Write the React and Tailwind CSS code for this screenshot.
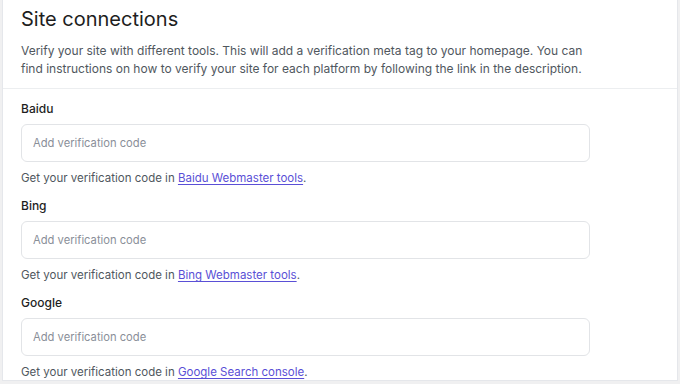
import React from 'react';

const platforms = [
  { name: 'Baidu', link: 'Baidu Webmaster tools' },
  { name: 'Bing', link: 'Bing Webmaster tools' },
  { name: 'Google', link: 'Google Search console' },
];

function Field({ name, link }) {
  return (
    <div className="flex flex-col">
      <label className="text-[12px] font-medium text-[#1e1e1e] leading-[18px]">{name}</label>
      <input
        type="text"
        placeholder="Add verification code"
        className="mt-[6px] h-[38px] w-[569px] rounded-md border border-[#e2e4e7] bg-white px-[11px] text-[11.2px] text-gray-800 placeholder:text-[#8a8f99] outline-none"
      />
      <p className="mt-[7px] text-[11.5px] leading-[18px] text-[#50575e]">
        Get your verification code in{' '}
        <a href="#" className="text-[#5a4fd6] underline underline-offset-2">
          {link}
        </a>
        .
      </p>
    </div>
  );
}

export default function App() {
  return (
    <div className="h-[384px] w-[680px] bg-[#f0f0f1] pl-[2px] pr-[2px] pb-[3px] overflow-hidden" style={{ fontFamily: 'Inter, "Noto Sans", sans-serif' }}>
      <div className="h-full border border-t-0 border-[#e5e7eb] bg-white">
        <div className="border-b border-[#eceef0] px-[18px] pt-[5px] pb-[10px]">
          <h2 className="text-[20px] leading-7 text-[#1e1e1e]">Site connections</h2>
          <p className="mt-[9px] w-[580px] text-[12px] leading-[18px] text-[#50575e]">
            Verify your site with different tools. This will add a verification meta tag to your homepage. You can
            find instructions on how to verify your site for each platform by following the link in the description.
          </p>
        </div>
        <div className="flex flex-col gap-[10px] px-[18px] pt-[11px]">
          {platforms.map((p) => (
            <Field key={p.name} {...p} />
          ))}
        </div>
      </div>
    </div>
  );
}
